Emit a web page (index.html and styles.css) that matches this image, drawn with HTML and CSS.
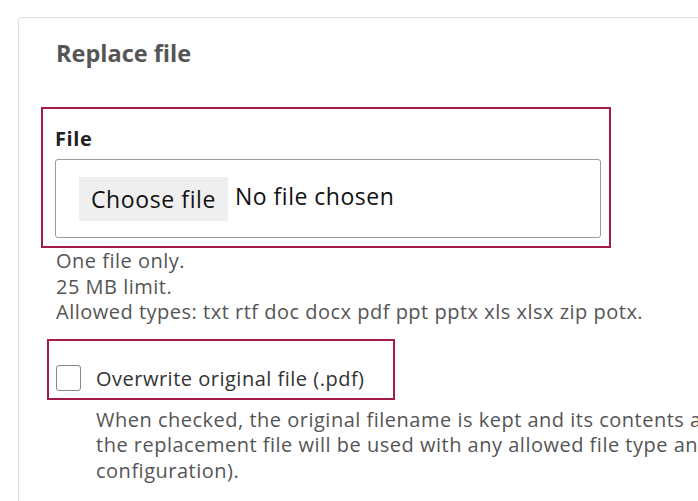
FILE: index.html
```html
<!DOCTYPE html>
<html lang="en">
<head>
   <meta charset="UTF-8">
   <meta name="viewport" content="width=device-width, initial-scale=1.0">
   <title>Replace file</title>
   <link rel="stylesheet" href="styles.css">
</head>
<body>
   <div class="card">
      <h2>Replace file</h2>
      <div class="highlight file-field">
         <label class="field-label">File</label>
         <div class="file-input">
            <span class="file-button">Choose file</span>
            <span class="file-status">No file chosen</span>
         </div>
      </div>
      <div class="description">
         One file only.<br>
         25 MB limit.<br>
         Allowed types: txt rtf doc docx pdf ppt pptx xls xlsx zip potx.
      </div>
      <div class="highlight check-field">
         <span class="checkbox"></span>
         <label class="check-label">Overwrite original file (.pdf)</label>
      </div>
      <div class="description check-description">
         When checked, the original filename is kept and its contents are replaced with the new file. If unchecked, the filename of<br>
         the replacement file will be used with any allowed file type and extension (subject to the upload<br>
         configuration).
      </div>
   </div>
</body>
</html>
```

FILE: styles.css
```css
* {
   margin: 0;
   padding: 0;
   box-sizing: border-box;
}
html, body {
   overflow: hidden;
}
body {
   background-color: #fff;
   font-family: "Open Sans", "Noto Sans", sans-serif;
   color: #333;
   padding: 17px 0 0 18px;
}
div.card {
   width: 1300px;
   min-height: 520px;
   border: 1px solid #ddd;
   border-radius: 4px 0 0 0;
   padding: 20px 37px;
}
div.card > h2 {
   font-size: 23.5px;
   line-height: 30px;
   font-weight: 700;
   color: #555;
   margin-bottom: 39px;
}
div.highlight {
   border: 2px solid #a11d48;
}
div.file-field {
   width: 570px;
   margin-left: -15px;
   padding: 18px 8px 8px 12px;
}
label.field-label {
   display: block;
   font-size: 20px;
   font-weight: 700;
   line-height: 24px;
   letter-spacing: 0.6px;
   color: #222;
   margin-bottom: 8px;
}
div.file-input {
   display: flex;
   align-items: center;
   height: 79px;
   border: 1px solid #999;
   border-radius: 3px;
   padding-left: 23px;
}
span.file-button {
   background-color: #efefef;
   font-size: 23px;
   line-height: 44px;
   letter-spacing: 0.6px;
   padding: 0 12px;
   color: #111;
   margin-right: 7px;
}
span.file-status {
   font-size: 23px;
   letter-spacing: 0.5px;
   color: #111;
   padding-bottom: 6px;
}
div.description {
   font-size: 20px;
   line-height: 25.5px;
   letter-spacing: 0.5px;
   color: #555;
   white-space: nowrap;
}
div.check-field {
   display: flex;
   align-items: center;
   width: 348px;
   margin: 14px 0 0 -9px;
   padding: 24px 0 6px 7px;
}
span.checkbox {
   width: 25px;
   height: 26px;
   border: 1px solid #888;
   border-radius: 3px;
   margin-right: 15px;
}
label.check-label {
   font-size: 20px;
   letter-spacing: 0.5px;
   color: #333;
}
div.check-description {
   padding-left: 40px;
   margin-top: 7px;
}
```
